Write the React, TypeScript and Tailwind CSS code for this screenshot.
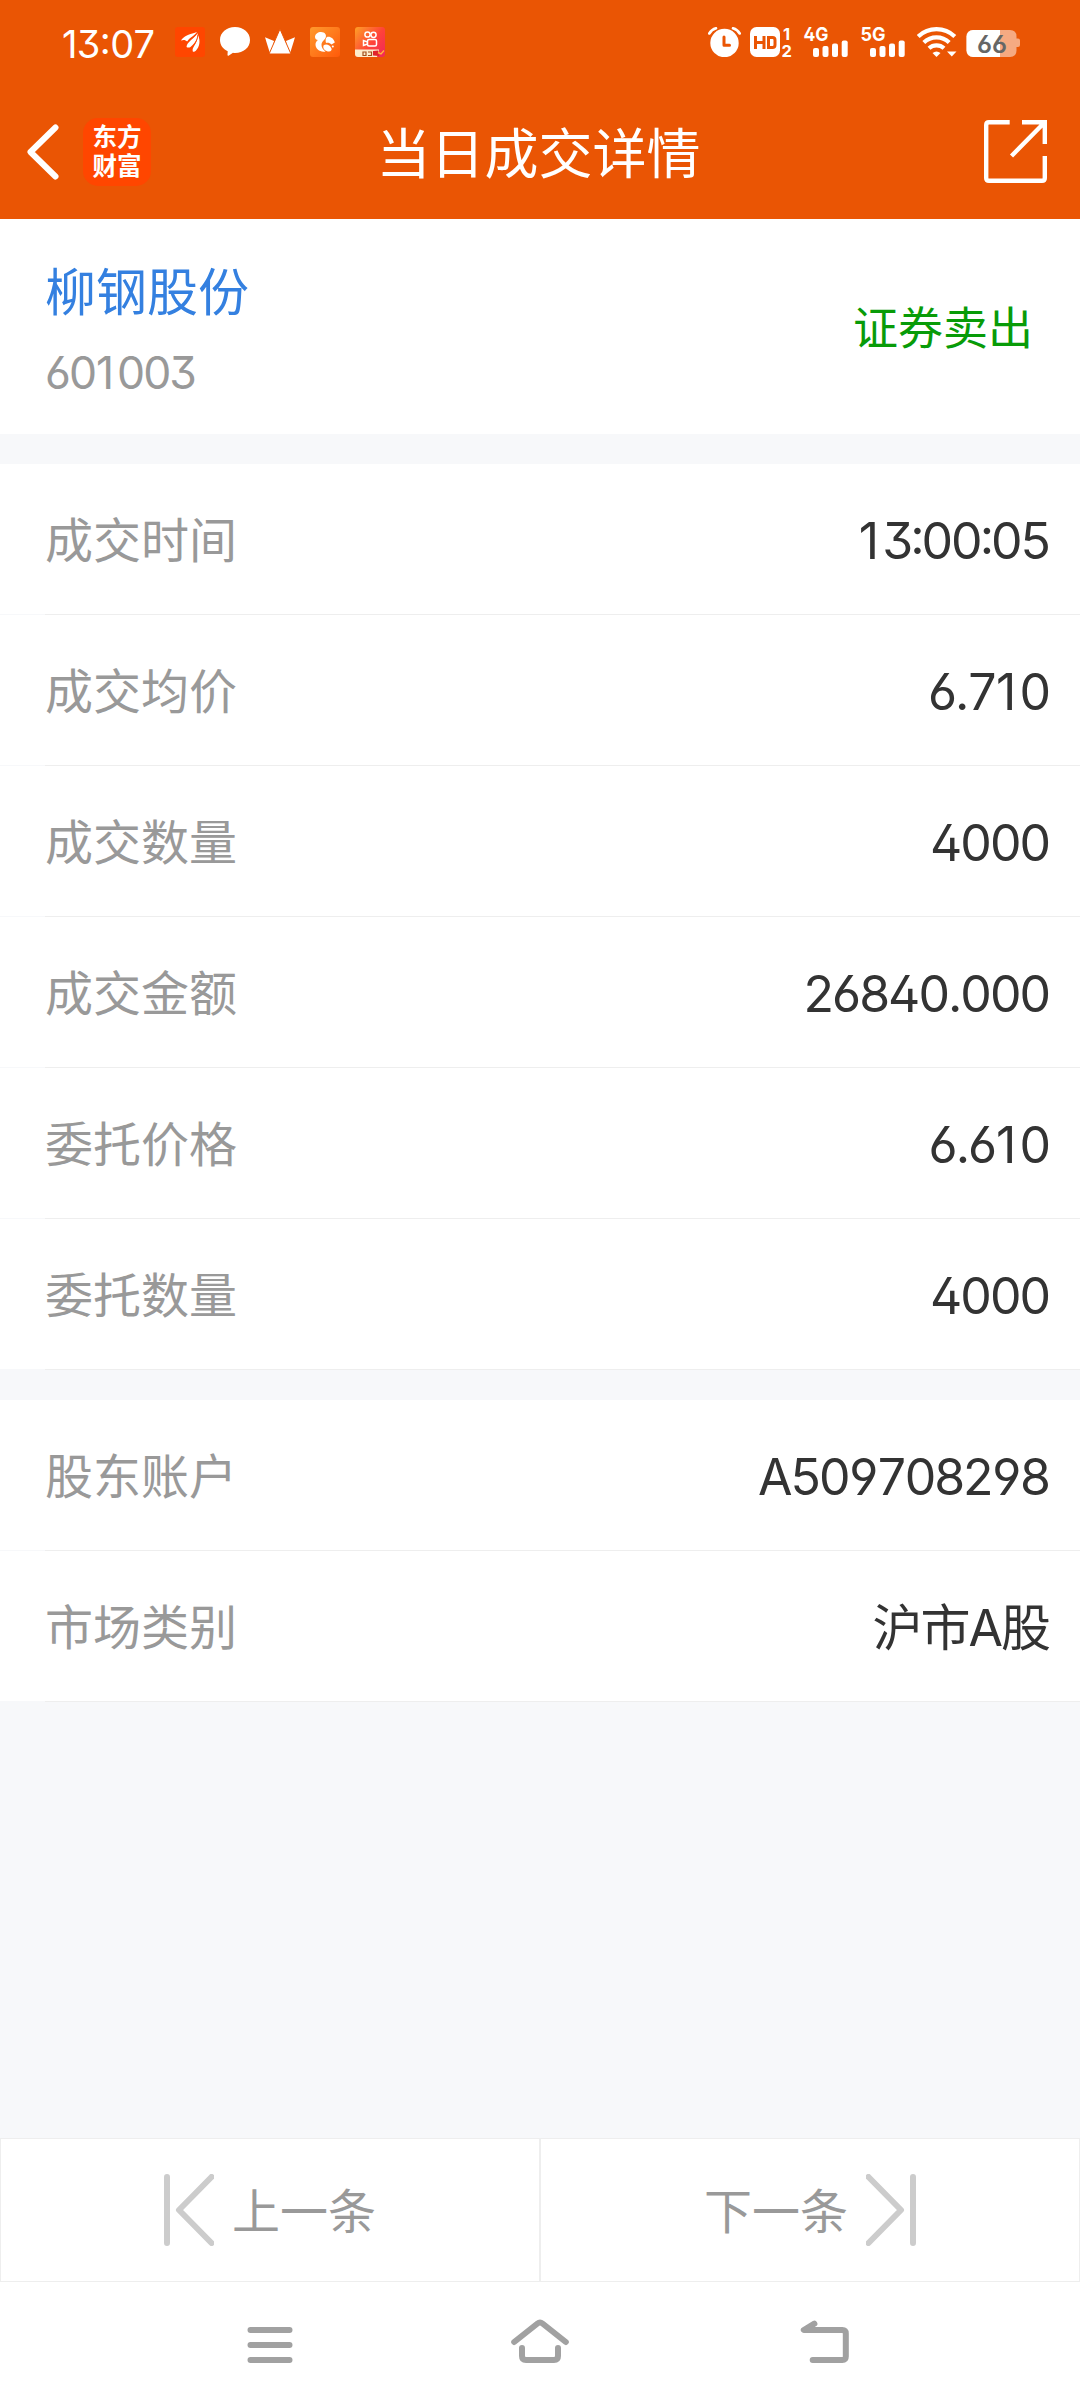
import React from "react";

const ORANGE = "#ea5504";

function StatusIconsLeft() {
  return (
    <div className="flex gap-[15px]">
      <svg width="30" height="30" viewBox="0 0 30 30">
        <rect width="30" height="30" rx="3" fill="#ff4600" />
        <g fill="#fff">
          <path d="M6 13.500C8.500 9 14 7.500 22 5C19 9.500 14 10.500 12.300 14.600C10.500 12.800 8.500 12.500 6 13.500Z" />
          <path d="M11.500 20C12 14.500 19.500 12 22.500 5.800C23.500 11 20 16.500 15.500 20C14.500 20.800 12.500 20.800 11.500 20Z" />
          <path d="M17.800 24.500C16.500 20 22.500 17 23 8C25.500 13.500 25 19.500 20.800 23.800C19.700 24.900 18.700 25 17.800 24.500Z" />
        </g>
        <path d="M11.800 16C14 12 19.500 10.500 22.500 6M16.500 21C19 18 22.500 14 22.900 8" fill="none" stroke="#ff4600" strokeWidth="0.800" />
      </svg>
      <svg width="30" height="30" viewBox="0 0 30 30">
        <path fill="#fff" d="M15 0C23.500 0 30 5.600 30 13C30 20.500 23.500 26 15 26C14 26 13.500 26 13 25.800L8.500 28.700C8 29 7.500 28.700 7.500 28L7.700 24.300C3 22 0 18 0 13C0 5.600 6.500 0 15 0Z" />
      </svg>
      <svg width="30" height="30" viewBox="0 0 30 30">
        <g fill="#fff">
          <path d="M0 10.200L9 14L7 26.500H5Z" />
          <path d="M30 10.200L21 14L23 26.500H25Z" />
          <path d="M15 2L25.500 26Q25.500 27 24.500 27H5.500Q4.500 27 4.500 26Z" stroke={ORANGE} strokeWidth="1" />
        </g>
      </svg>
      <svg width="30" height="30" viewBox="0 0 30 30">
        <defs>
          <linearGradient id="squirrel" x1="0" y1="0" x2="1" y2="1">
            <stop offset="0" stopColor="#ff9a2e" />
            <stop offset="1" stopColor="#ff5a0a" />
          </linearGradient>
        </defs>
        <rect width="30" height="30" rx="3" fill="url(#squirrel)" />
        <path fill="#fff" d="M5 10C5 7 8 5 11 5C15 5 17 8 15.500 11C14.500 13 11.500 14.500 11.500 18C11.500 20.500 13 22.500 15.500 24.500C10 25.500 5.500 22 5.500 17.500C5.500 15.500 6.500 14 8 13C6.500 13 5 12 5 10Z" />
        <path fill="#fff" d="M17 10C20 9 24 11.500 24.800 15.500L21.500 17.500C20 16 18 15.500 16 16C15.300 13.500 15.500 11 17 10Z" />
        <path fill="#fff" d="M13.500 18.500C16 16.500 20 18 21.500 21.500C22 23 21 24.500 19 24.500C15.500 24.500 12.500 22 13.500 18.500Z" />
        <circle cx="22.800" cy="19.500" r="1" fill="#fff" />
      </svg>
      <svg width="30" height="30" viewBox="0 0 30 30">
        <defs>
          <linearGradient id="video" x1="0" y1="0" x2="1" y2="0.800">
            <stop offset="0" stopColor="#ffa126" />
            <stop offset="0.600" stopColor="#ff4338" />
            <stop offset="1" stopColor="#f32c55" />
          </linearGradient>
        </defs>
        <rect width="30" height="30" rx="3" fill="url(#video)" />
        <g fill="none" stroke="#fff" strokeWidth="1.500">
          <circle cx="12.500" cy="7.500" r="2.600" />
          <circle cx="18.500" cy="7.800" r="2.600" />
          <rect x="12.500" y="12.500" width="9" height="6.500" rx="1.500" />
          <path d="M12.500 15L8.500 13.500V18.500L12.500 17" />
        </g>
        <path d="M0 22.500H24L22 30H3Q0 30 0 27Z" fill="#fdeccb" />
        <path d="M8 25H11V28.500H8ZM13 25H16.500V28.500H13" fill="none" stroke="#a3501c" strokeWidth="1.200" />
        <path d="M18 24L23 23.500L24 29L18 28.500Z" fill="#e0242c" />
        <path d="M23 25.500L26 27L29 23.500" fill="none" stroke="#ffb53c" strokeWidth="1.400" />
      </svg>
    </div>
  );
}

function Signal({ label }: { label: string }) {
  return (
    <svg className="overflow-visible" width="44" height="30" viewBox="0 0 44 30" fill="#fff">
      <text x="-0.500" y="14" fontSize="19" fontWeight="700" fontFamily="Inter, sans-serif" textLength="25" lengthAdjust="spacingAndGlyphs">
        {label}
      </text>
      <rect x="9" y="21" width="6" height="9" rx="2" />
      <rect x="18.500" y="19" width="6" height="11" rx="2" />
      <rect x="28" y="16.500" width="6" height="13.500" rx="2" />
      <rect x="37.700" y="13.500" width="6" height="16.500" rx="2" />
    </svg>
  );
}

function StatusIconsRight() {
  return (
    <div className="flex">
      <svg width="33" height="30" viewBox="0 0 33 30">
        <circle cx="16.500" cy="16" r="14.200" fill="#fff" />
        <path d="M1.300 6.500Q3.500 2.500 8 1.300M31.700 6.500Q29.500 2.500 25 1.300" fill="none" stroke="#fff" strokeWidth="2.600" strokeLinecap="round" />
        <path d="M16 10V18.200H21.500" fill="none" stroke={ORANGE} strokeWidth="3" strokeLinecap="round" strokeLinejoin="round" />
      </svg>
      <svg className="ml-[9px] overflow-visible" width="43" height="30" viewBox="0 0 43 30">
        <rect width="30" height="30" rx="6.500" fill="#fff" />
        <g fill="none" stroke={ORANGE} strokeWidth="3">
          <path d="M5.500 9V22M14 9V22M5.500 15.500H14" />
          <path d="M18.500 10.500H22.500Q25 10.500 25 13V18Q25 20.500 22.500 20.500H18.500Z" />
        </g>
        <text x="33" y="12.500" fontSize="16.500" fontWeight="700" fill="#fff" fontFamily="Inter, sans-serif">1</text>
        <text x="31.500" y="30" fontSize="16.500" fontWeight="700" fill="#fff" fontFamily="Inter, sans-serif">2</text>
      </svg>
      <div className="ml-[11px] flex gap-[13px]">
        <Signal label="4G" />
        <Signal label="5G" />
      </div>
      <svg className="ml-[12px]" width="40" height="30" viewBox="0 0 40 30">
        <g fill="none" stroke="#fff" strokeWidth="4.200">
          <path d="M1.200 9.500C11.500 -0.300 27.500 -0.300 37.800 9.500" />
          <path d="M6.800 15.500C14 8.700 25 8.700 32.200 15.500" />
          <path d="M12 21.200C16.300 17.300 22.700 17.300 27 21.200" />
        </g>
        <path d="M15.500 26Q19.500 23 23.500 26L19.500 30Z" fill="#fff" />
        <path d="M30 24.500H39.500L34.800 29.500Z" fill="#fff" />
      </svg>
      <svg className="ml-[9px] overflow-visible" width="54" height="30" viewBox="0 0 54 30">
        <defs>
          <clipPath id="level">
            <rect x="0" y="0" width="34" height="30" />
          </clipPath>
        </defs>
        <path d="M7 3H44Q50.500 3 50.500 9.500V11.500H52Q54 11.500 54 13.500V18Q54 20 52 20H50.500V23.500Q50.500 30 44 30H7Q0.500 30 0.500 23.500V9.500Q0.500 3 7 3Z" fill="#fff" fillOpacity="0.500" />
        <rect x="0.500" y="3" width="50" height="27" rx="6.500" fill="#fff" clipPath="url(#level)" />
        <text x="11" y="25.500" fontSize="24.500" fontWeight="600" fill="#666" fontFamily="Inter, sans-serif" textLength="30" lengthAdjust="spacingAndGlyphs">66</text>
      </svg>
    </div>
  );
}

/* Evens out the spacing of the narrow glyphs and of the separators. */
function Figures({ text }: { text: string }) {
  return (
    <>
      {text.split(/([179:.])/).map((part, i) => {
        if (part === "1") return <span key={i} className="mr-[5px] ml-[1px]">{part}</span>;
        if (part === "7" || part === "9") return <span key={i} className="mx-[0.700px]">{part}</span>;
        if (part === ":") return <span key={i} className="mx-[-1px] [font-feature-settings:'case']">{part}</span>;
        return <span key={i}>{part}</span>;
      })}
    </>
  );
}

function Row({ label, value }: { label: string; value: string }) {
  return (
    <div className="flex h-[151px] flex-col bg-white">
      <div className="flex flex-1 items-center justify-between pt-[3px] pr-[31px] pl-[45px]">
        <span className="text-[48px] leading-none text-[#999999]">{label}</span>
        <span className="text-[50px] leading-none tracking-[-2px] text-[#333333]">
          <Figures text={value} />
        </span>
      </div>
      <div className="h-px bg-[#f7f8fa] pl-[45px]">
        <div className="h-px bg-[#eeeeee]" />
      </div>
    </div>
  );
}

const trade: [string, string][] = [
  ["成交时间", "13:00:05"],
  ["成交均价", "6.710"],
  ["成交数量", "4000"],
  ["成交金额", "26840.000"],
  ["委托价格", "6.610"],
  ["委托数量", "4000"],
];

export default function App() {
  return (
    <div className="flex h-[2408px] w-[1080px] flex-col bg-[#f7f8fa] font-[Inter,'Noto_Sans_CJK_SC',sans-serif] [font-feature-settings:'ss01','calt'] [font-kerning:none]">
      <header className="h-[219px] bg-[#ea5504] text-white">
        <div className="flex h-[84px] items-center justify-between pr-[60px] pl-[62px]">
          <div className="flex items-center gap-[21px]">
            <span className="w-[92px] pt-[3px] text-[38px] leading-none tracking-[-0.6px] whitespace-nowrap">13:07</span>
            <StatusIconsLeft />
          </div>
          <StatusIconsRight />
        </div>
        <div className="flex h-[135px] items-center justify-between pr-[33px] pl-[27px]">
          <div className="flex w-[220px] items-center gap-[24px]">
            <svg width="32" height="56" viewBox="0 0 32 56" fill="none" stroke="#fff" strokeWidth="6" strokeLinecap="round" strokeLinejoin="round">
              <path d="M28.500 3.500L3.500 28L28.500 52.500" />
            </svg>
            <div className="flex h-[68px] w-[68px] flex-col items-center justify-center gap-[5px] rounded-[15px] bg-[#ff4600] text-[24.500px] leading-[24px] font-bold">
              <span>东方</span>
              <span>财富</span>
            </div>
          </div>
          <h1 className="pt-[6px] pl-[3px] text-[54px] leading-none">当日成交详情</h1>
          <div className="flex w-[220px] justify-end">
            <svg width="63" height="63" viewBox="0 0 63 63" fill="none" stroke="#fff" strokeWidth="4.400">
              <path d="M25.700 2.200H5Q2.200 2.200 2.200 5V58Q2.200 60.800 5 60.800H58Q60.800 60.800 60.800 58V36" />
              <path d="M38 2.200H60.800V24M60 3L27.500 36" />
            </svg>
          </div>
        </div>
      </header>

      <section className="flex h-[215px] items-center justify-between bg-white pr-[47px] pl-[45px]">
        <div className="flex flex-col gap-[30px] pt-[6px]">
          <span className="text-[51px] leading-[56px] text-[#3480e0]">柳钢股份</span>
          <span className="text-[44.500px] leading-[44px] tracking-[-2px] text-[#999999]">
            <Figures text="601003" />
          </span>
        </div>
        <span className="pt-[4px] text-[45px] leading-none text-[#089b08]">证券卖出</span>
      </section>

      <section className="mt-[30px]">
        {trade.map(([label, value]) => (
          <Row key={label} label={label} value={value} />
        ))}
      </section>

      <section className="mt-[30px]">
        <Row label="股东账户" value="A509708298" />
        <Row label="市场类别" value="沪市A股" />
      </section>

      <div className="mt-auto grid h-[144px] grid-cols-2 bg-white text-[48px] leading-none text-[#999999]">
        <button className="flex items-center border border-[#eeeeee] pl-[163px]">
          <svg width="50" height="72" viewBox="0 0 50 72" fill="none" stroke="#cccccc" strokeWidth="6" strokeLinecap="round" strokeLinejoin="round">
            <path d="M3 3V69M47.500 3L15 36L47.500 69" />
          </svg>
          <span className="ml-[18px] pt-[4px]">上一条</span>
        </button>
        <button className="flex items-center justify-end border border-[#eeeeee] pr-[163px]">
          <span className="mr-[18px] pt-[4px]">下一条</span>
          <svg width="50" height="72" viewBox="0 0 50 72" fill="none" stroke="#cccccc" strokeWidth="6" strokeLinecap="round" strokeLinejoin="round">
            <path d="M47 3V69M2.500 3L35 36L2.500 69" />
          </svg>
        </button>
      </div>

      <nav className="flex h-[126px] items-start bg-white pt-[34px] pl-[242px]">
        <svg width="56" height="56" viewBox="0 0 56 56" fill="none" stroke="#a1a1a1" strokeWidth="6" strokeLinecap="round">
          <path d="M8.500 14H47.500M8.500 29H47.500M8.500 44H47.500" />
        </svg>
        <svg className="ml-[212px]" width="60" height="56" viewBox="0 0 60 56" fill="none" stroke="#a1a1a1" strokeWidth="6" strokeLinecap="round" strokeLinejoin="round">
          <path d="M4.200 26L27.500 7.500Q30 5.500 32.500 7.500L55.800 26M12 32V40Q12 44 16 44H44Q48 44 48 40V32" />
        </svg>
        <svg className="ml-[228px]" width="56" height="56" viewBox="0 0 56 56" fill="none" stroke="#a1a1a1" strokeWidth="6" strokeLinecap="round" strokeLinejoin="round">
          <path d="M16.400 7.700L5.800 14H44.300Q47.800 14 47.800 17.500V40.500Q47.800 44 44.300 44H14.700" />
        </svg>
      </nav>
    </div>
  );
}
